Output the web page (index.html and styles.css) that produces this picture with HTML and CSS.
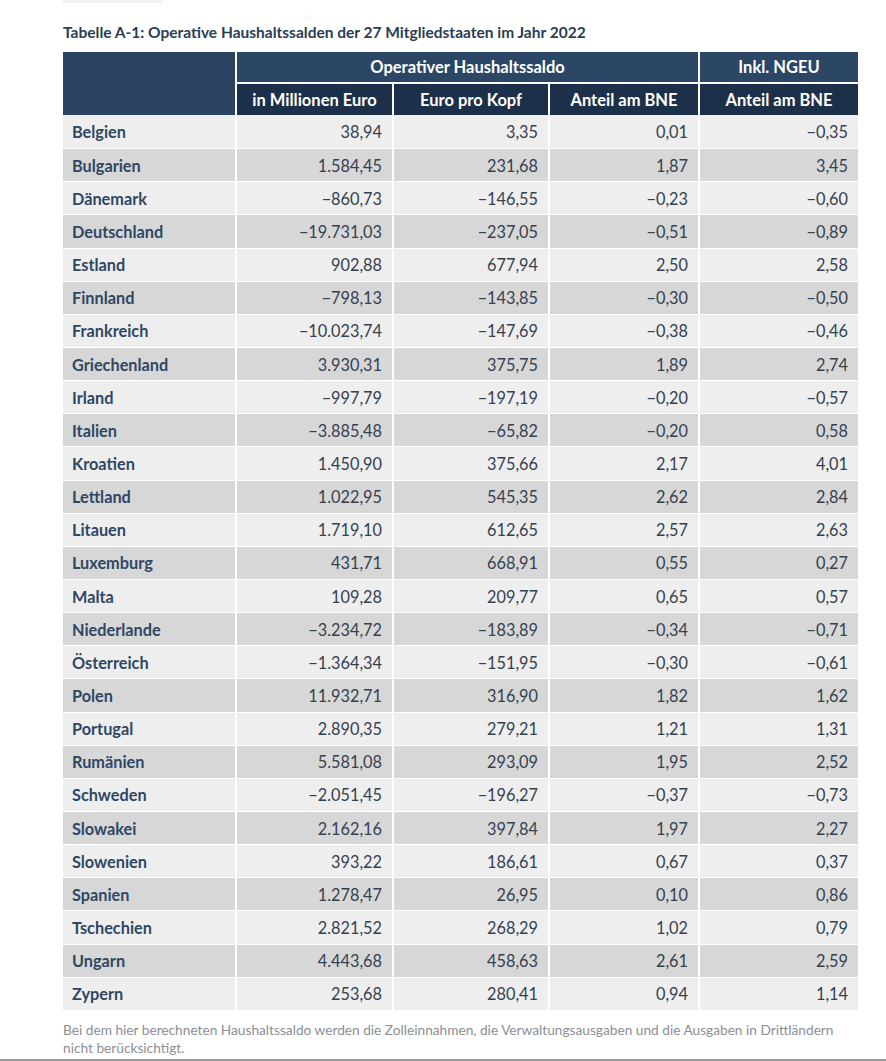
FILE: index.html
```html
<!DOCTYPE html>
<html lang="de">
<head>
<meta charset="utf-8">
<title>Tabelle A-1</title>
<link rel="stylesheet" href="styles.css">
</head>
<body>
<div class="page">
  <div class="topfrag"></div>
  <h1 class="title">Tabelle A-1: Operative Haushaltssalden der 27 Mitgliedstaaten im Jahr 2022</h1>
  <table class="data">
    <colgroup>
      <col class="c-name"><col class="c-mio"><col class="c-kopf"><col class="c-bne"><col class="c-ngeu">
    </colgroup>
    <thead>
      <tr class="h1">
        <th rowspan="2" class="blank"></th>
        <th colspan="3">Operativer Haushaltssaldo</th>
        <th>Inkl. NGEU</th>
      </tr>
      <tr class="h2">
        <th>in Millionen Euro</th>
        <th>Euro pro Kopf</th>
        <th>Anteil am BNE</th>
        <th>Anteil am BNE</th>
      </tr>
    </thead>
    <tbody>
      <tr><td>Belgien</td><td>38,94</td><td>3,35</td><td>0,01</td><td>−0,35</td></tr>
      <tr><td>Bulgarien</td><td>1.584,45</td><td>231,68</td><td>1,87</td><td>3,45</td></tr>
      <tr><td>Dänemark</td><td>−860,73</td><td>−146,55</td><td>−0,23</td><td>−0,60</td></tr>
      <tr><td>Deutschland</td><td>−19.731,03</td><td>−237,05</td><td>−0,51</td><td>−0,89</td></tr>
      <tr><td>Estland</td><td>902,88</td><td>677,94</td><td>2,50</td><td>2,58</td></tr>
      <tr><td>Finnland</td><td>−798,13</td><td>−143,85</td><td>−0,30</td><td>−0,50</td></tr>
      <tr><td>Frankreich</td><td>−10.023,74</td><td>−147,69</td><td>−0,38</td><td>−0,46</td></tr>
      <tr><td>Griechenland</td><td>3.930,31</td><td>375,75</td><td>1,89</td><td>2,74</td></tr>
      <tr><td>Irland</td><td>−997,79</td><td>−197,19</td><td>−0,20</td><td>−0,57</td></tr>
      <tr><td>Italien</td><td>−3.885,48</td><td>−65,82</td><td>−0,20</td><td>0,58</td></tr>
      <tr><td>Kroatien</td><td>1.450,90</td><td>375,66</td><td>2,17</td><td>4,01</td></tr>
      <tr><td>Lettland</td><td>1.022,95</td><td>545,35</td><td>2,62</td><td>2,84</td></tr>
      <tr><td>Litauen</td><td>1.719,10</td><td>612,65</td><td>2,57</td><td>2,63</td></tr>
      <tr><td>Luxemburg</td><td>431,71</td><td>668,91</td><td>0,55</td><td>0,27</td></tr>
      <tr><td>Malta</td><td>109,28</td><td>209,77</td><td>0,65</td><td>0,57</td></tr>
      <tr><td>Niederlande</td><td>−3.234,72</td><td>−183,89</td><td>−0,34</td><td>−0,71</td></tr>
      <tr><td>Österreich</td><td>−1.364,34</td><td>−151,95</td><td>−0,30</td><td>−0,61</td></tr>
      <tr><td>Polen</td><td>11.932,71</td><td>316,90</td><td>1,82</td><td>1,62</td></tr>
      <tr><td>Portugal</td><td>2.890,35</td><td>279,21</td><td>1,21</td><td>1,31</td></tr>
      <tr><td>Rumänien</td><td>5.581,08</td><td>293,09</td><td>1,95</td><td>2,52</td></tr>
      <tr><td>Schweden</td><td>−2.051,45</td><td>−196,27</td><td>−0,37</td><td>−0,73</td></tr>
      <tr><td>Slowakei</td><td>2.162,16</td><td>397,84</td><td>1,97</td><td>2,27</td></tr>
      <tr><td>Slowenien</td><td>393,22</td><td>186,61</td><td>0,67</td><td>0,37</td></tr>
      <tr><td>Spanien</td><td>1.278,47</td><td>26,95</td><td>0,10</td><td>0,86</td></tr>
      <tr><td>Tschechien</td><td>2.821,52</td><td>268,29</td><td>1,02</td><td>0,79</td></tr>
      <tr><td>Ungarn</td><td>4.443,68</td><td>458,63</td><td>2,61</td><td>2,59</td></tr>
      <tr><td>Zypern</td><td>253,68</td><td>280,41</td><td>0,94</td><td>1,14</td></tr>
    </tbody>
  </table>
  <p class="note">Bei dem hier berechneten Haushaltssaldo werden die Zolleinnahmen, die Verwaltungsausgaben und die Ausgaben in Drittländern<br>nicht berücksichtigt.</p>
</div>
<div class="bottomline"></div>
</body>
</html>
```
FILE: styles.css
```css
html, body {
  margin: 0;
  padding: 0;
  background: #ffffff;
}
body {
  width: 886px;
  height: 1061px;
  overflow: hidden;
  position: relative;
  font-family: "Lato", "Open Sans", sans-serif;
}
.page {
  padding: 0 28px 0 63px;
}
.topfrag {
  width: 100px;
  height: 3px;
  background: #f2f2f2;
}
.title {
  margin: 19px 0 0 0;
  height: 30px;
  font-size: 15.5px;
  font-weight: 700;
  color: #2a3d55;
  line-height: 20px;
}
.data {
  width: 795px;
  border-collapse: separate;
  border-spacing: 0;
  table-layout: fixed;
  font-size: 16.3px;
}
.c-name { width: 172px; }
.c-mio { width: 157px; }
.c-kopf { width: 156px; }
.c-bne { width: 150px; }
.c-ngeu { width: 160px; }

.data th {
  color: #ffffff;
  font-weight: 700;
  text-align: center;
  padding: 0;
  font-size: 16.5px;
}
.data th + th { border-left: 2px solid #ffffff; }
.h1 th {
  background: #2c4766;
  height: 30px;
}
.h1 th.blank { background: #2a4361; }
.h2 th {
  background: #1d3049;
  height: 33px;
  border-top: 2px solid #ffffff;
  box-sizing: border-box;
}
.h2 th:first-child { border-left: 2px solid #ffffff; }

.data td {
  height: 33.15px;
  box-sizing: border-box;
  border-top: 1px solid #ffffff;
  padding: 0 10px 0 9px;
  text-align: right;
  color: #36414f;
  background: #eeeeee;
  white-space: nowrap;
}
.data td + td { border-left: 2px solid #ffffff; }
.data tbody tr:first-child td { border-top: 0; }
.data tbody tr:nth-child(even) td { background: #d7d7d7; }
.data td:first-child {
  text-align: left;
  font-weight: 700;
  color: #2e4764;
}
.note {
  margin: 11px 0 0 0;
  font-size: 13.7px;
  line-height: 18px;
  color: #8a8f96;
}
.bottomline {
  position: absolute;
  left: 0;
  right: 0;
  bottom: 0;
  height: 2px;
  background: #9a9a9a;
}
```
